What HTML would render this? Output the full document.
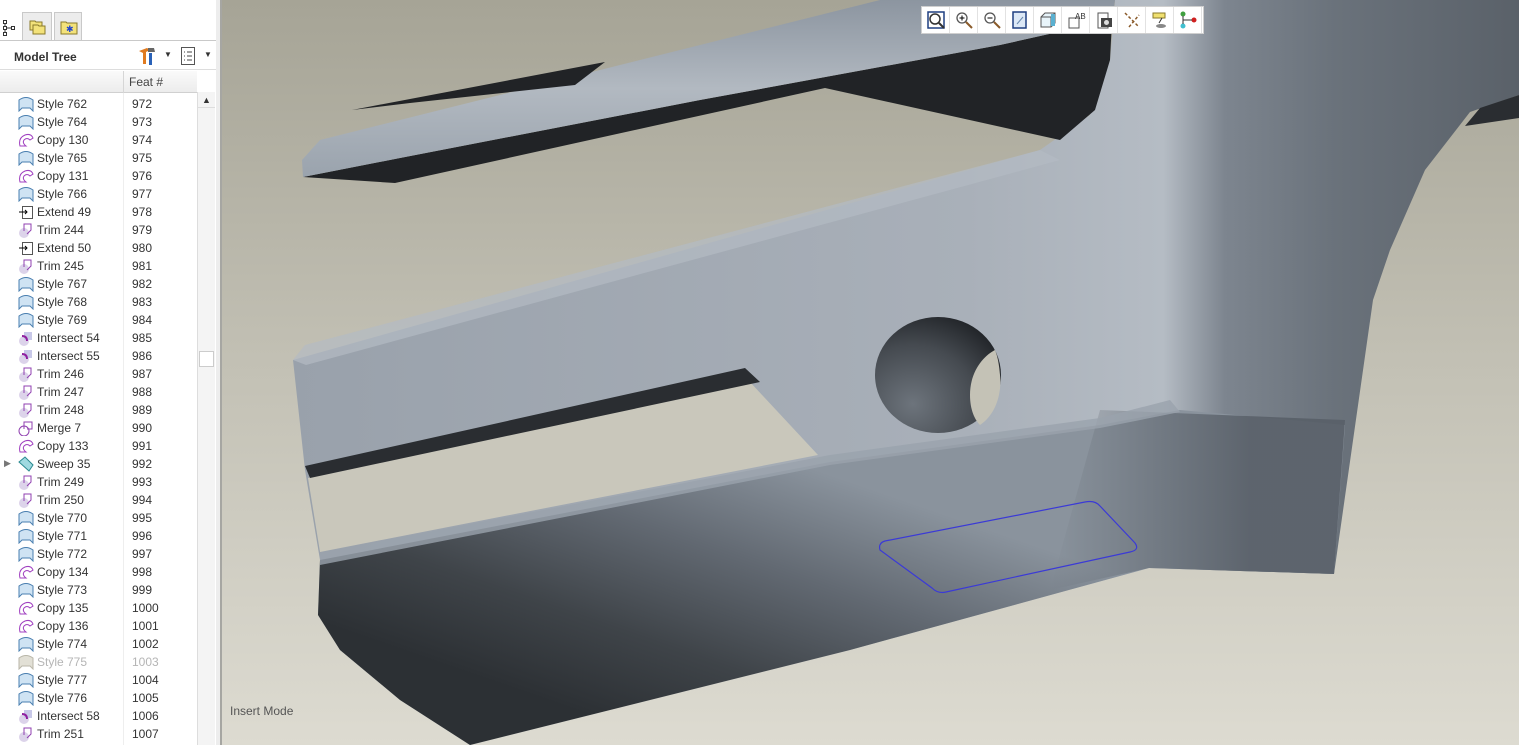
<!DOCTYPE html><html><head><meta charset="utf-8"><style>
*{margin:0;padding:0;box-sizing:border-box}
body{width:1519px;height:745px;overflow:hidden;position:relative;font-family:"Liberation Sans",Arial,sans-serif;background:#fff}
#side{position:absolute;left:0;top:0;width:216px;height:745px;background:#fff}
#split{position:absolute;left:216px;top:0;width:6px;height:745px;background:#ededed;border-right:2px solid #a6a6a2}
.tab{position:absolute;top:12px;height:28px;border:1px solid #c9c9c9;border-bottom:none;background:#ececec}
#hdr{position:absolute;left:0;top:40px;width:216px;height:30px;border-top:1px solid #c9c9c9;border-bottom:1px solid #ddd}
#hdr b{position:absolute;left:14px;top:9px;font-size:12px;color:#333}
#col{position:absolute;left:0;top:71px;width:197px;height:22px;background:linear-gradient(#fafafa,#ececec);border-bottom:1px solid #d0d0d0}
#col span{position:absolute;left:129px;top:4px;font-size:12px;color:#444}
#col i{position:absolute;left:123px;top:0;width:1px;height:22px;background:#d6d6d6}
#sb{position:absolute;left:197px;top:92px;width:18px;height:653px;background:#f4f4f4;border-left:1px solid #ddd}
.row{position:absolute;left:0;height:18px;width:197px;font-size:12px;color:#333}
.row .t{position:absolute;left:37px;top:2px}
.row .n{position:absolute;left:132px;top:2px}
.row svg{position:absolute;left:18px;top:1px}
#sep{position:absolute;left:123px;top:93px;width:1px;height:652px;background:#eee}
#vp{position:absolute;left:222px;top:0;width:1297px;height:745px}
#tb{position:absolute;left:921px;top:6px;width:283px;height:28px;background:#fff;border:1px solid #cfcfcf}
#tb div{position:absolute;top:0;width:28px;height:26px;border-right:1px solid #e2e2e2}
</style></head><body>
<div id="side">
<svg style="position:absolute;left:2px;top:19px" width="16" height="18"><g fill="none" stroke="#333"><rect x="1.5" y="1.5" width="3" height="3"/><rect x="1.5" y="7.5" width="3" height="3"/><rect x="1.5" y="13.5" width="3" height="3"/><rect x="9.5" y="7.5" width="3" height="3"/><path d="M3 4.5v3M3 10.5v3M4.5 9h5"/></g></svg>
<div class="tab" style="left:22px;width:30px"><svg style="position:absolute;left:5px;top:5px" width="20" height="18"><path d="M2 3h5l1 1h6v8H2z" fill="#f3e27a" stroke="#8a7a2a"/><path d="M5 7h5l1 1h6v8H5z" fill="#f3e27a" stroke="#8a7a2a"/></svg></div>
<div class="tab" style="left:54px;width:28px"><svg style="position:absolute;left:4px;top:5px" width="20" height="18"><path d="M2 4h5l1 1h10v11H2z" fill="#f3e27a" stroke="#8a7a2a"/><text x="7" y="14" font-size="9" fill="#2244cc">✱</text></svg></div>
<div id="hdr"><b>Model Tree</b>
<svg style="position:absolute;left:136px;top:4px" width="22" height="22"><path d="M3 6l8-3 3 2-4 2v12H7V8z" fill="#e07b20"/><path d="M13 8h3v12h-3z" fill="#2a62b8"/><path d="M12 3l6 0 1 4h-7z" fill="#666"/></svg>
<span style="position:absolute;left:164px;top:9px;font-size:8px;color:#333">▼</span>
<svg style="position:absolute;left:180px;top:5px" width="16" height="20"><rect x="1.5" y="1.5" width="13" height="17" fill="#fff" stroke="#555"/><path d="M4 6h1M7 6h5M4 10h1M7 10h5M4 14h1M7 14h5" stroke="#444"/></svg>
<span style="position:absolute;left:204px;top:9px;font-size:8px;color:#333">▼</span></div>
<div id="col"><i></i><span>Feat #</span></div>
<div id="sep"></div>
<div id="sb"><div style="position:absolute;left:0;top:0;width:17px;height:16px;border-bottom:1px solid #ddd;font-size:9px;text-align:center;line-height:16px;color:#333">▲</div>
<div style="position:absolute;left:1px;top:259px;width:15px;height:16px;background:#fff;border:1px solid #ccc"></div></div>
<div id="rows"></div>
</div>
<div id="split"></div>
<div id="vp">
<svg width="1297" height="745" viewBox="222 0 1297 745" style="position:absolute;left:0;top:0">
<defs>
<linearGradient id="bg" x1="0" y1="0" x2="0" y2="1"><stop offset="0" stop-color="#a6a496"/><stop offset=".5" stop-color="#c3c1b5"/><stop offset="1" stop-color="#dddbd1"/></linearGradient>
<linearGradient id="body" gradientUnits="userSpaceOnUse" x1="293" y1="0" x2="1519" y2="0"><stop offset="0" stop-color="#99a1ab"/><stop offset=".55" stop-color="#a9b0b9"/><stop offset=".71" stop-color="#b5bcc4"/><stop offset=".76" stop-color="#7d858f"/><stop offset=".85" stop-color="#6a727b"/><stop offset="1" stop-color="#5a6169"/></linearGradient>
<linearGradient id="low" gradientUnits="userSpaceOnUse" x1="700" y1="430" x2="600" y2="720"><stop offset="0" stop-color="#8a939d"/><stop offset=".35" stop-color="#626972"/><stop offset=".7" stop-color="#3f4449"/><stop offset="1" stop-color="#2c3034"/></linearGradient>
<linearGradient id="lowR" gradientUnits="userSpaceOnUse" x1="1050" y1="0" x2="1250" y2="0"><stop offset="0" stop-color="#5a6169" stop-opacity="0"/><stop offset="1" stop-color="#585f68" stop-opacity=".9"/></linearGradient>
<linearGradient id="strip" x1="0" y1="1" x2="0" y2="0"><stop offset="0" stop-color="#9aa3ad"/><stop offset=".5" stop-color="#b2b9c1"/><stop offset="1" stop-color="#8c95a0"/></linearGradient>
<radialGradient id="hole" cx=".3" cy=".75" r=".85"><stop offset="0" stop-color="#6d747c"/><stop offset=".6" stop-color="#454a50"/><stop offset="1" stop-color="#1f2226"/></radialGradient>
</defs>
<rect x="222" y="0" width="1297" height="745" fill="url(#bg)"/>
<path d="M1115 0H1519V95L1470 112 1425 170 1390 250 1373 300 1334 574 1149 568 850 650 470 745 400 700 340 650 318 615 320 560 305 470 293 360 1040 150 1090 115 1110 60Z" fill="url(#body)"/>
<path d="M1519 95V118L1465 126 1480 108Z" fill="#2a2d31"/>
<!-- lower bar -->
<path d="M320 560L830 462 1100 425 1180 410 1345 425 1334 574 1149 568 850 650 470 745 400 700 340 650 318 615Z" fill="url(#low)"/>
<path d="M1100 410L1345 420 1334 574 1149 568 1050 590Z" fill="url(#lowR)"/>
<path d="M320 553L830 455 1100 418 1170 400 1180 412 1100 428 830 465 320 565Z" fill="#9aa3ad" opacity=".8"/>
<!-- middle bar front face -->
<path d="M293 360L305 345 1040 150 1060 160 306 365Z" fill="#b4bbc3" opacity=".7"/>
<!-- opening -->
<path d="M308 478L750 382 818 455 320 552Z" fill="#c9c7bb"/>
<path d="M305 466L745 368 760 382 310 478Z" fill="#2a2d31"/>
<!-- dark region under top strip -->
<path d="M303 177L395 183 825 88 1060 140 1095 110 1110 60 1112 20 1000 45 700 100 400 158Z" fill="#212326"/>
<path d="M302 160L320 140 600 70 880 0H1115L1112 20 1000 45 700 100 400 158 303 177Z" fill="url(#strip)"/>
<path d="M352 110L605 62 575 85 410 103Z" fill="#212326"/>
<ellipse cx="938" cy="375" rx="63" ry="58" fill="url(#hole)"/>
<path d="M995 350C985 355 970 370 970 395 970 410 975 420 980 425 995 415 1002 395 1000 375 999 362 997 355 995 350Z" fill="#c4c2b6"/>
<path d="M885 541L1085 502Q1095 500 1100 506L1135 543Q1140 550 1130 552L946 592Q938 594 932 588L880 550Q878 543 885 541Z" fill="none" stroke="#3b3ad6" stroke-width="1.2"/>
<text x="230" y="715" font-family="Liberation Sans,Arial,sans-serif" font-size="12" fill="#555">Insert Mode</text>
</svg>
<div id="tb" style="left:699px"></div>
</div>
<script>
var d=[["Style 762",972,"s"],["Style 764",973,"s"],["Copy 130",974,"c"],["Style 765",975,"s"],["Copy 131",976,"c"],["Style 766",977,"s"],["Extend 49",978,"e"],["Trim 244",979,"t"],["Extend 50",980,"e"],["Trim 245",981,"t"],["Style 767",982,"s"],["Style 768",983,"s"],["Style 769",984,"s"],["Intersect 54",985,"i"],["Intersect 55",986,"i"],["Trim 246",987,"t"],["Trim 247",988,"t"],["Trim 248",989,"t"],["Merge 7",990,"m"],["Copy 133",991,"c"],["Sweep 35",992,"w"],["Trim 249",993,"t"],["Trim 250",994,"t"],["Style 770",995,"s"],["Style 771",996,"s"],["Style 772",997,"s"],["Copy 134",998,"c"],["Style 773",999,"s"],["Copy 135",1000,"c"],["Copy 136",1001,"c"],["Style 774",1002,"s"],["Style 775",1003,"g"],["Style 777",1004,"s"],["Style 776",1005,"s"],["Intersect 58",1006,"i"],["Trim 251",1007,"t"]];
var ic={s:'<path d="M1 15V4Q8-1 15 4V15L12 12H4Z" fill="#cfe3f3" stroke="#4a7fb0"/>',g:'<path d="M1 15V4Q8-1 15 4V15L12 12H4Z" fill="#e2e0d6" stroke="#b9b6a8"/>',c:'<path d="M2 14Q0 6 7 3 13 1 15 6L12 8Q9 5 6 8 4 11 8 14Z" fill="none" stroke="#a040c0"/>',e:'<rect x="4.5" y="2.5" width="10" height="12" fill="#fff" stroke="#555"/><path d="M1 8h8M7 6l2 2-2 2" stroke="#000" fill="none"/>',t:'<circle cx="6" cy="11" r="5" fill="#dcd3ea"/><path d="M6 9V2h7v6l-4 4" fill="none" stroke="#9040b0"/>',i:'<circle cx="6" cy="11" r="5" fill="#dcd3ea"/><rect x="6" y="2" width="8" height="8" fill="#c8c8e8"/><path d="M4 6Q9 6 9 11" stroke="#9020a0" stroke-width="2" fill="none"/>',m:'<circle cx="6" cy="11" r="5" fill="#fff" stroke="#9040b0"/><path d="M6 9V2h8v7h-5" fill="none" stroke="#9040b0"/>',w:'<path d="M1 6L7 1 15 9 11 15Z" fill="#9fd9e0" stroke="#2a8a90"/>'};
var h='';d.forEach(function(r,k){var y=95+k*18;h+='<div class="row" style="top:'+y+'px'+(r[2]=='g'?';color:#b5b5b5':'')+'"><svg width="16" height="16">'+ic[r[2]]+'</svg><span class="t">'+r[0]+'</span><span class="n">'+r[1]+'</span>'+(r[2]=='w'?'<span style="position:absolute;left:4px;top:3px;font-size:9px;color:#777">▶</span>':'')+'</div>';});
document.getElementById('rows').innerHTML=h;
var tb=document.getElementById('tb'),s='';
var g=['<circle cx="9" cy="9" r="5" fill="none" stroke="#333" stroke-width="1.5"/><rect x="2" y="2" width="16" height="16" fill="none" stroke="#1f3f80" stroke-width="1.5"/><path d="M13 13l5 5" stroke="#333" stroke-width="2"/>','<circle cx="8" cy="8" r="5" fill="#fff" stroke="#555" stroke-width="1.3"/><path d="M5.5 8h5M8 5.5v5" stroke="#000"/><path d="M12 12l6 6" stroke="#8a5a2a" stroke-width="2"/>','<circle cx="8" cy="8" r="5" fill="#fff" stroke="#555" stroke-width="1.3"/><path d="M5.5 8h5" stroke="#000"/><path d="M12 12l6 6" stroke="#8a5a2a" stroke-width="2"/>','<rect x="3" y="2" width="13" height="16" fill="#dce8f6" stroke="#1f3f80" stroke-width="1.5"/><path d="M7 14l6-7" stroke="#6a8ab0"/>','<path d="M3 7l4-4h10v10l-4 4H3z" fill="#e8f4fa" stroke="#555"/><path d="M3 7h10v10M13 7l4-4" fill="none" stroke="#555"/><rect x="13" y="4" width="4" height="12" fill="#5ab0d0"/>','<path d="M3 8h10v10H3z" fill="#fff" stroke="#555"/><text x="9" y="9" font-size="8" font-family="Liberation Sans" fill="#333">AB</text>','<rect x="4" y="3" width="10" height="15" fill="#fff" stroke="#555"/><rect x="7" y="8" width="11" height="9" fill="#444"/><circle cx="12.5" cy="12.5" r="2.5" fill="#ddd"/>','<path d="M3 3l14 14M7 17L17 5" stroke="#8a5a2a" stroke-width="1.5" stroke-dasharray="3 2"/>','<rect x="3" y="3" width="12" height="5" fill="#f0e070" stroke="#8a7a2a"/><path d="M12 8l-3 5" stroke="#333"/><ellipse cx="11" cy="16" rx="5" ry="2" fill="#888"/>','<circle cx="5" cy="4" r="2.5" fill="#40a040"/><circle cx="5" cy="16" r="2.5" fill="#40c0d0"/><circle cx="16" cy="10" r="2.5" fill="#d02020"/><path d="M5 6v8M5 10h9" stroke="#333"/>'];
g.forEach(function(x,k){s+='<div style="left:'+(k*28)+'px"><svg width="20" height="20" style="position:absolute;left:4px;top:3px">'+x+'</svg></div>';});
tb.innerHTML=s;
</script>
</body></html>
